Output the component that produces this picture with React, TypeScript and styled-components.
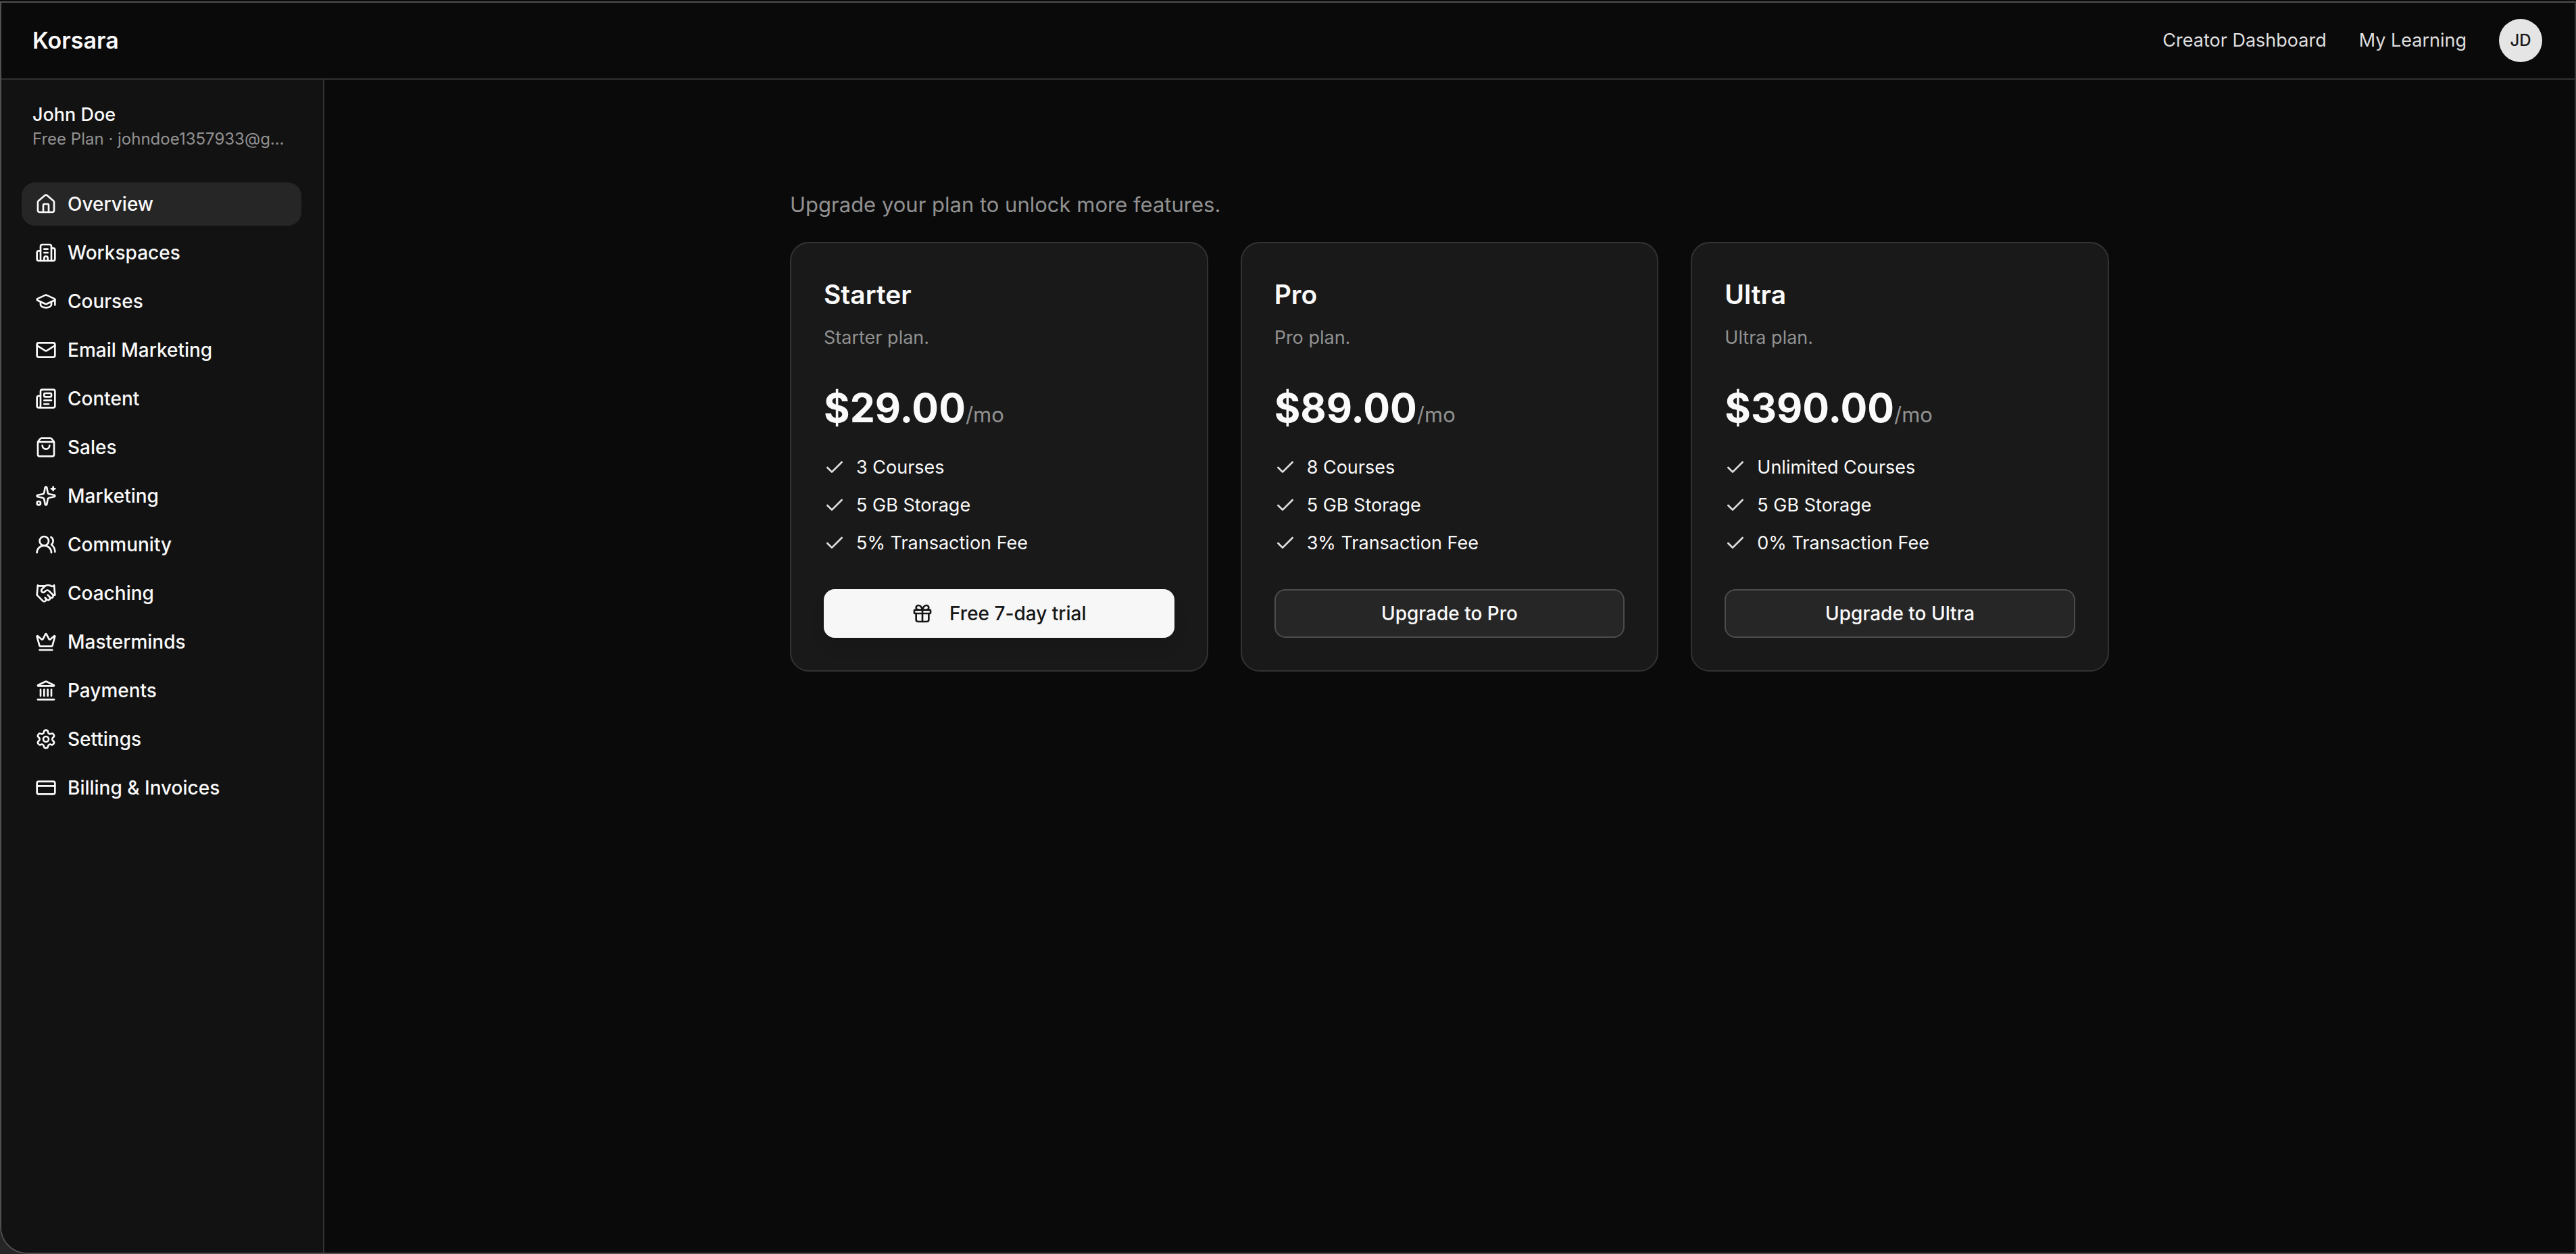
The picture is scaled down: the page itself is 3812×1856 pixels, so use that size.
import React from "react";
import styled, { createGlobalStyle, css } from "styled-components";
import {
  Building2,
  Check,
  CreditCard,
  Crown,
  Gift,
  GraduationCap,
  Handshake,
  House,
  Landmark,
  Mail,
  Newspaper,
  Settings,
  ShoppingBag,
  Sparkles,
  UsersRound,
  type LucideIcon,
} from "lucide-react";

const color = {
  page: "#0a0a0a",
  sidebar: "#121212",
  card: "#191919",
  raised: "#262626",
  line: "#303030",
  cardLine: "#333333",
  buttonLine: "#4c4c4c",
  frame: "#505050",
  text: "#fafafa",
  soft: "#dfdfdf",
  muted: "#919191",
};

const GlobalStyle = createGlobalStyle`
  *, *::before, *::after { box-sizing: border-box; }
  body {
    margin: 0;
    background: #262626;
    color: ${color.text};
    font-family: Inter, "Liberation Sans", sans-serif;
    font-size: 27px;
    line-height: 40px;
  }
  h1, h2, p, ul { margin: 0; padding: 0; }
  ul { list-style: none; }
  a { color: inherit; text-decoration: none; }
  button { font: inherit; cursor: pointer; }
`;

const Backdrop = styled.div`
  min-height: 100vh;
  padding-top: 2px;
  display: flex;
  background: linear-gradient(${color.page} 50%, #262626 50%);
`;

const Window = styled.div`
  flex: 1;
  min-width: 0;
  display: flex;
  flex-direction: column;
  overflow: hidden;
  background: ${color.page};
  border: 2px solid ${color.frame};
  border-right-color: #383838;
  border-radius: 0 0 4px 40px;
`;

const Header = styled.header`
  display: flex;
  align-items: center;
  justify-content: space-between;
  height: 114px;
  padding: 0 48px 0 46px;
  border-bottom: 2px solid ${color.line};
`;

const Brand = styled.a`
  font-size: 34px;
  line-height: 48px;
  font-weight: 600;
`;

const TopNav = styled.nav`
  display: flex;
  align-items: center;
  gap: 48px;
  color: ${color.soft};
`;

const Avatar = styled.button`
  width: 64px;
  height: 64px;
  padding: 0;
  border: 0;
  border-radius: 50%;
  background: #e4e5e4;
  color: #171717;
  font-size: 24px;
  font-weight: 500;
`;

const Body = styled.div`
  flex: 1;
  display: flex;
`;

const Sidebar = styled.aside`
  flex: none;
  width: 478px;
  padding: 32px 32px 32px 30px;
  display: flex;
  flex-direction: column;
  gap: 48px;
  background: ${color.sidebar};
  border-right: 2px solid ${color.cardLine};
`;

const Account = styled.div`
  padding: 0 16px;
`;

const AccountName = styled.p`
  font-weight: 500;
`;

const AccountDetail = styled.p`
  font-size: 24px;
  line-height: 32px;
  color: ${color.muted};
  white-space: nowrap;
  overflow: hidden;
`;

const Menu = styled.ul`
  display: flex;
  flex-direction: column;
  gap: 8px;
`;

const MenuLink = styled.a<{ $active?: boolean }>`
  display: flex;
  align-items: center;
  gap: 16px;
  height: 64px;
  padding: 0 20px;
  border-radius: 20px;
  font-size: 28px;
  font-weight: 500;
  background: ${(p) => (p.$active ? color.raised : "transparent")};
`;

const Main = styled.main`
  flex: 1;
  min-width: 0;
  padding: 160px 48px 48px;
`;

const Content = styled.div`
  max-width: 1952px;
  margin: 0 auto;
  display: flex;
  flex-direction: column;
  gap: 30px;
`;

const Lead = styled.p`
  font-size: 31px;
  line-height: 50px;
  color: ${color.muted};
`;

const Plans = styled.div`
  display: grid;
  grid-template-columns: repeat(3, minmax(0, 1fr));
  gap: 48px;
`;

const Card = styled.section`
  display: flex;
  flex-direction: column;
  padding: 48px;
  background: ${color.card};
  border: 2px solid ${color.cardLine};
  border-radius: 28px;
`;

const PlanName = styled.h2`
  font-size: 39px;
  line-height: 56px;
  font-weight: 600;
`;

const PlanNote = styled.p`
  margin-top: 16px;
  color: ${color.muted};
`;

const Price = styled.p`
  margin-top: 48px;
  font-size: 59px;
  line-height: 72px;
  font-weight: 700;
`;

const Period = styled.span`
  font-size: 31px;
  line-height: 32px;
  font-weight: 400;
  color: ${color.muted};
`;

const Features = styled.ul`
  margin: 32px 0 48px;
  display: flex;
  flex-direction: column;
  gap: 16px;
`;

const Feature = styled.li`
  display: flex;
  align-items: center;
  gap: 16px;

  svg {
    color: ${color.soft};
  }
`;

const PlanButton = styled.button<{ $primary?: boolean }>`
  display: flex;
  align-items: center;
  justify-content: center;
  gap: 24px;
  height: 72px;
  padding: 0 32px;
  border-radius: 16px;
  font-size: 28px;
  font-weight: 500;
  ${(p) =>
    p.$primary
      ? css`
          border: 0;
          background: #f7f7f7;
          color: #171717;
          box-shadow: 0 16px 24px -4px rgba(0, 0, 0, 0.12);
        `
      : css`
          border: 2px solid ${color.buttonLine};
          background: ${color.raised};
          color: ${color.text};
        `}
`;

const menu: { label: string; icon: LucideIcon }[] = [
  { label: "Overview", icon: House },
  { label: "Workspaces", icon: Building2 },
  { label: "Courses", icon: GraduationCap },
  { label: "Email Marketing", icon: Mail },
  { label: "Content", icon: Newspaper },
  { label: "Sales", icon: ShoppingBag },
  { label: "Marketing", icon: Sparkles },
  { label: "Community", icon: UsersRound },
  { label: "Coaching", icon: Handshake },
  { label: "Masterminds", icon: Crown },
  { label: "Payments", icon: Landmark },
  { label: "Settings", icon: Settings },
  { label: "Billing & Invoices", icon: CreditCard },
];

const plans = [
  {
    name: "Starter",
    price: "$29.00",
    features: ["3 Courses", "5 GB Storage", "5% Transaction Fee"],
    action: "Free 7-day trial",
    trial: true,
  },
  {
    name: "Pro",
    price: "$89.00",
    features: ["8 Courses", "5 GB Storage", "3% Transaction Fee"],
    action: "Upgrade to Pro",
    trial: false,
  },
  {
    name: "Ultra",
    price: "$390.00",
    features: ["Unlimited Courses", "5 GB Storage", "0% Transaction Fee"],
    action: "Upgrade to Ultra",
    trial: false,
  },
];

export default function App() {
  return (
    <>
      <GlobalStyle />
      <Backdrop>
        <Window>
          <Header>
            <Brand href="#">Korsara</Brand>
            <TopNav>
              <a href="#creator">Creator Dashboard</a>
              <a href="#learning">My Learning</a>
              <Avatar type="button">JD</Avatar>
            </TopNav>
          </Header>
          <Body>
            <Sidebar>
              <Account>
                <AccountName>John Doe</AccountName>
                <AccountDetail>Free Plan · johndoe1357933@g…</AccountDetail>
              </Account>
              <nav>
                <Menu>
                  {menu.map(({ label, icon: Icon }, i) => (
                    <li key={label}>
                      <MenuLink href={`#${label}`} $active={i === 0}>
                        <Icon size={32} />
                        {label}
                      </MenuLink>
                    </li>
                  ))}
                </Menu>
              </nav>
            </Sidebar>
            <Main>
              <Content>
                <Lead>Upgrade your plan to unlock more features.</Lead>
                <Plans>
                  {plans.map((plan) => (
                    <Card key={plan.name}>
                      <PlanName>{plan.name}</PlanName>
                      <PlanNote>{plan.name} plan.</PlanNote>
                      <Price>
                        {plan.price}
                        <Period>/mo</Period>
                      </Price>
                      <Features>
                        {plan.features.map((feature) => (
                          <Feature key={feature}>
                            <Check size={32} />
                            {feature}
                          </Feature>
                        ))}
                      </Features>
                      <PlanButton type="button" $primary={plan.trial}>
                        {plan.trial && <Gift size={32} />}
                        {plan.action}
                      </PlanButton>
                    </Card>
                  ))}
                </Plans>
              </Content>
            </Main>
          </Body>
        </Window>
      </Backdrop>
    </>
  );
}
